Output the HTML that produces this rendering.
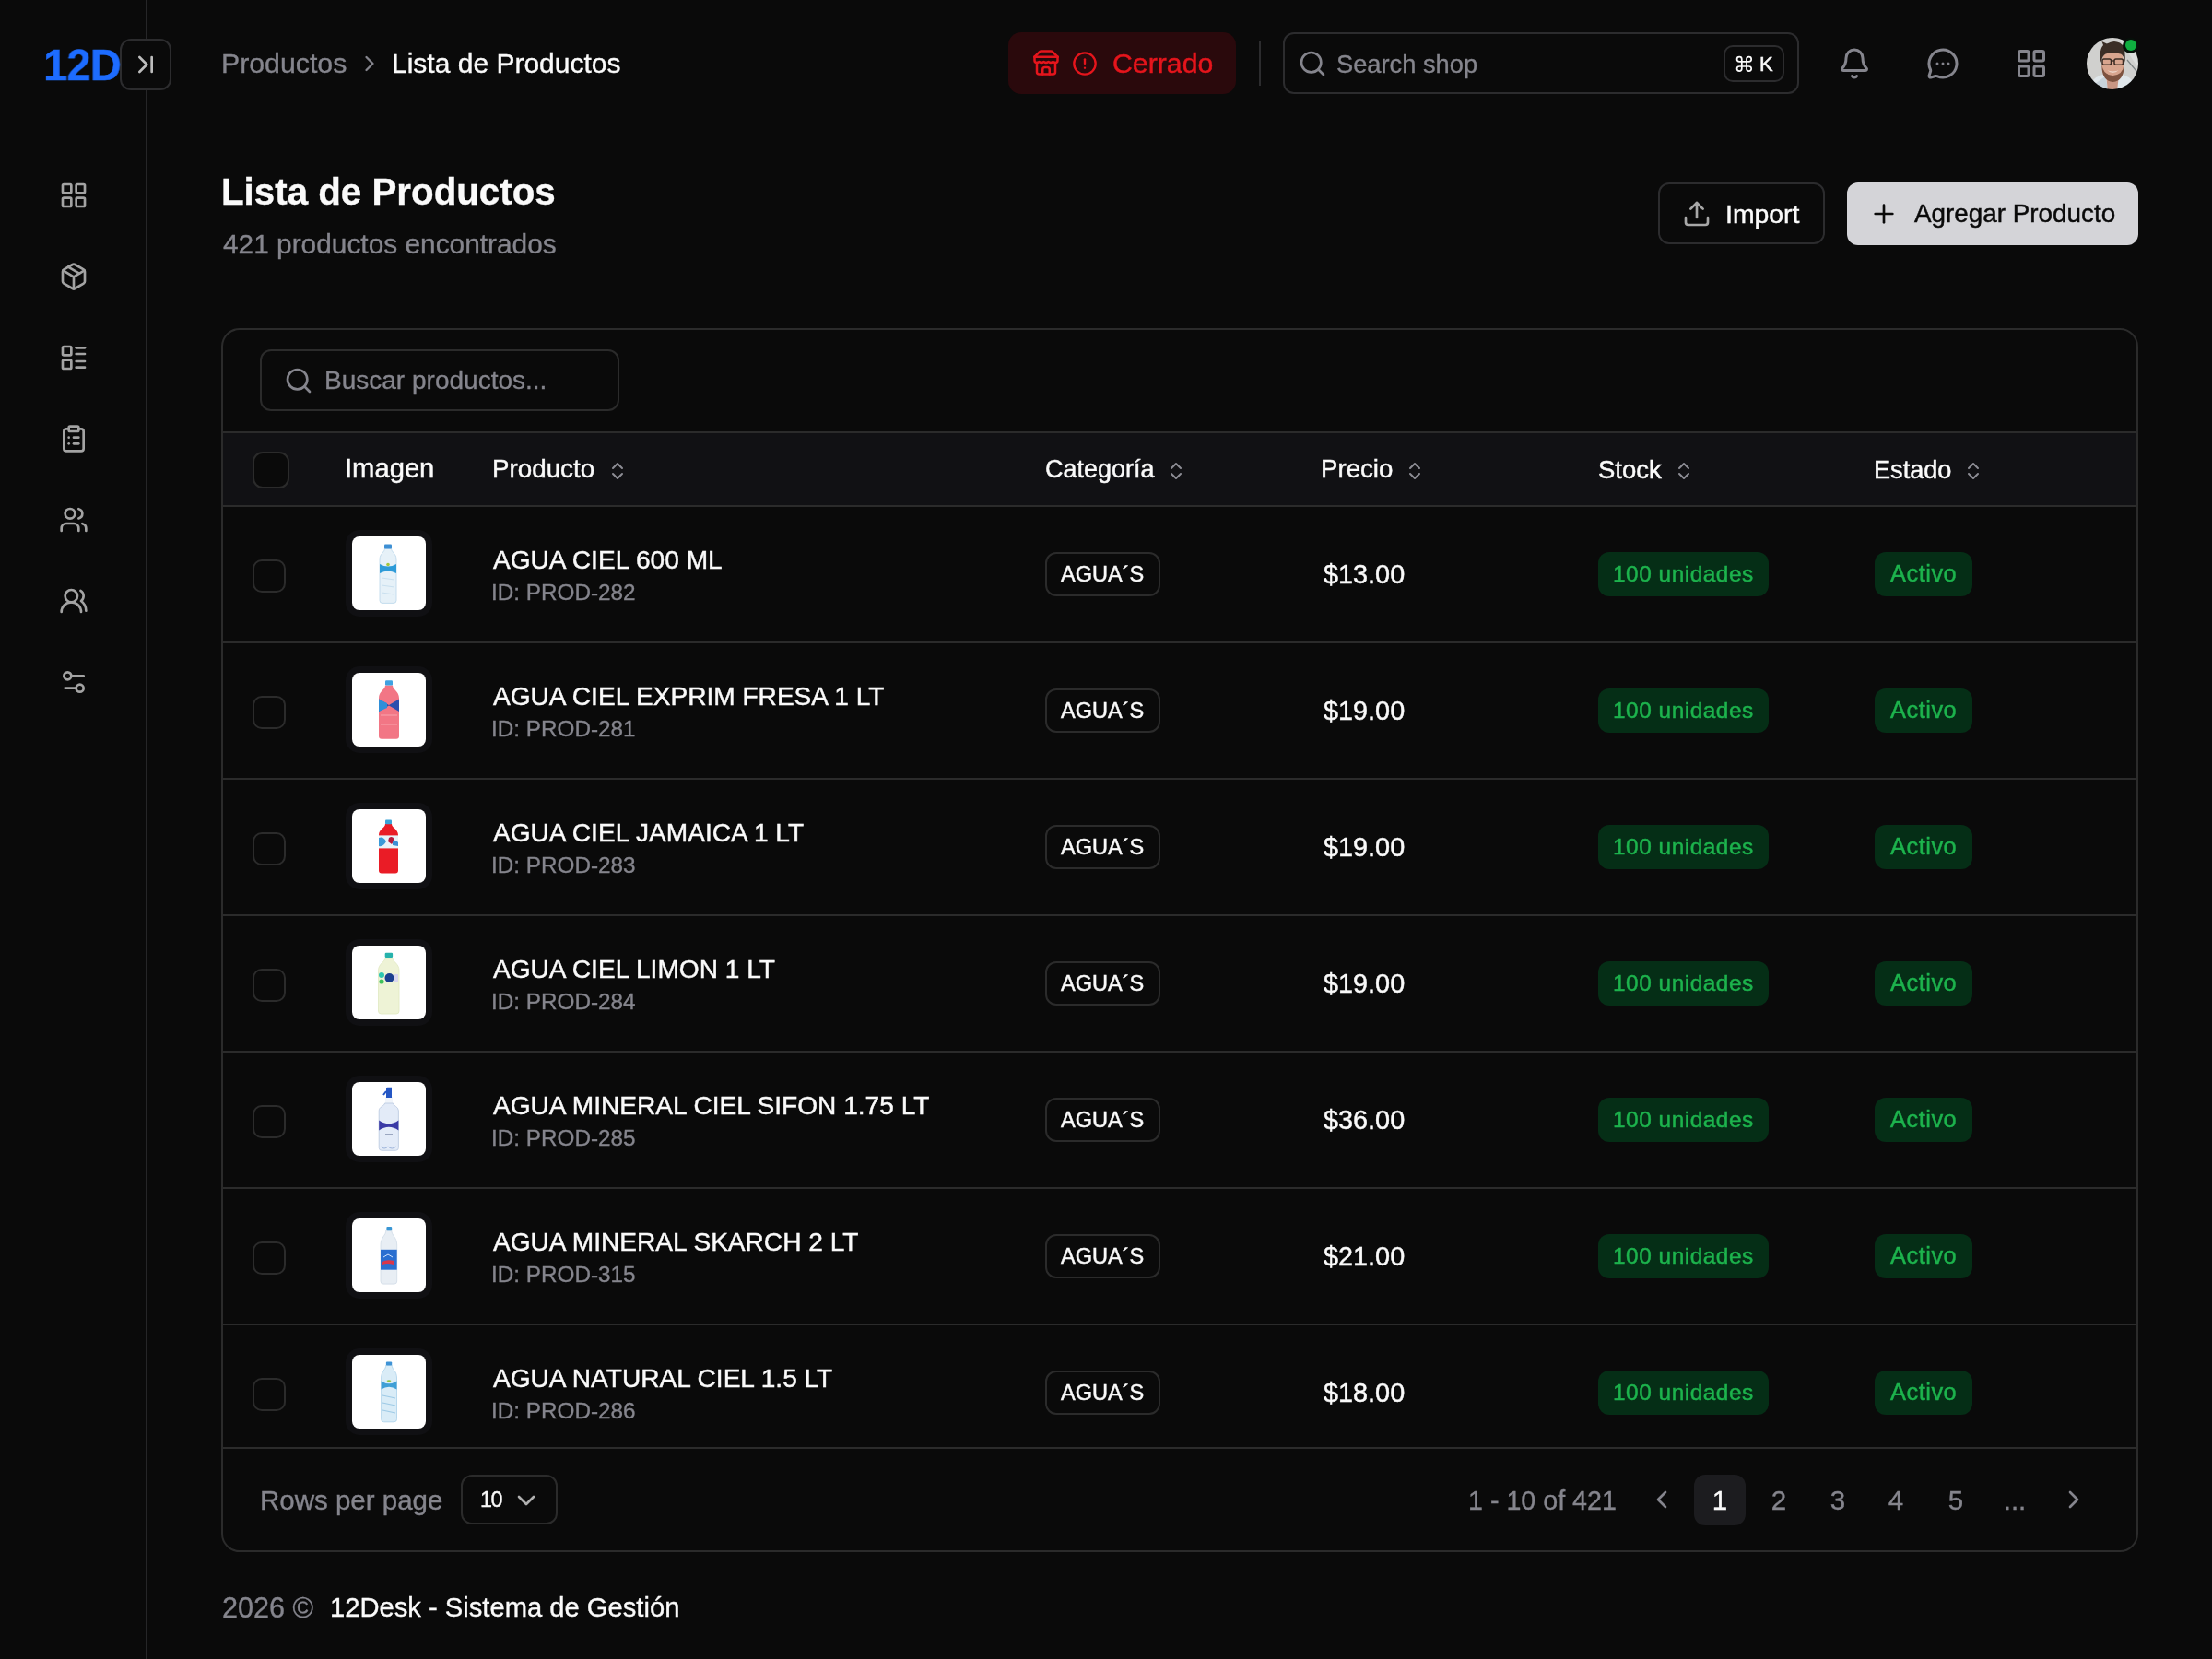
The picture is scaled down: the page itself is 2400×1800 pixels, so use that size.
<!DOCTYPE html>
<html><head><meta charset="utf-8">
<style>
*{margin:0;padding:0;box-sizing:border-box}
html,body{width:2400px;height:1800px;overflow:hidden;background:#0a0a0a;font-family:"Liberation Sans",sans-serif;color:#fafafa;-webkit-font-smoothing:antialiased}
.t{will-change:transform;-webkit-text-stroke:0.35px currentColor}
.m{-webkit-text-stroke:0.45px currentColor}
.a{position:absolute}
.t{position:absolute;white-space:nowrap;line-height:1}
svg.i{position:absolute;fill:none;stroke:currentColor;stroke-width:2;stroke-linecap:round;stroke-linejoin:round}
.mut{color:#85858d}
</style></head><body>
<!-- sidebar -->
<div class="a" style="left:158px;top:0;width:2px;height:1800px;background:#262628"></div>
<div class="a" style="left:130px;top:42px;width:56px;height:56px;border:2px solid #2c2c2e;border-radius:12px;background:#0a0a0a"></div>
<svg class="i" style="left:142px;top:54px;color:#bdbdbd" width="32" height="32" viewBox="0 0 24 24"><path d="m7 18 6-6-6-6"/><path d="M17 6v12"/></svg>

<div style="color:#a3a3a3">
<svg class="i" style="left:64px;top:196px" width="32" height="32" viewBox="0 0 24 24"><rect width="7" height="7" x="3" y="3" rx="1"/><rect width="7" height="7" x="14" y="3" rx="1"/><rect width="7" height="7" x="14" y="14" rx="1"/><rect width="7" height="7" x="3" y="14" rx="1"/></svg>
<svg class="i" style="left:64px;top:284px" width="32" height="32" viewBox="0 0 24 24"><path d="M11 21.73a2 2 0 0 0 2 0l7-4A2 2 0 0 0 21 16V8a2 2 0 0 0-1-1.73l-7-4a2 2 0 0 0-2 0l-7 4A2 2 0 0 0 3 8v8a2 2 0 0 0 1 1.73z"/><path d="M12 22V12"/><path d="m3.3 7 7.703 4.734a2 2 0 0 0 1.994 0L20.7 7"/><path d="m7.5 4.27 9 5.15"/></svg>
<svg class="i" style="left:64px;top:372px" width="32" height="32" viewBox="0 0 24 24"><rect width="7" height="7" x="3" y="3" rx="1"/><rect width="7" height="7" x="3" y="14" rx="1"/><path d="M14 4h7"/><path d="M14 9h7"/><path d="M14 15h7"/><path d="M14 20h7"/></svg>
<svg class="i" style="left:64px;top:460px" width="32" height="32" viewBox="0 0 24 24"><rect width="8" height="4" x="8" y="2" rx="1" ry="1"/><path d="M16 4h2a2 2 0 0 1 2 2v14a2 2 0 0 1-2 2H6a2 2 0 0 1-2-2V6a2 2 0 0 1 2-2h2"/><path d="M12 11h4"/><path d="M12 16h4"/><path d="M8 11h.01"/><path d="M8 16h.01"/></svg>
<svg class="i" style="left:64px;top:548px" width="32" height="32" viewBox="0 0 24 24"><path d="M16 21v-2a4 4 0 0 0-4-4H6a4 4 0 0 0-4 4v2"/><circle cx="9" cy="7" r="4"/><path d="M22 21v-2a4 4 0 0 0-3-3.87"/><path d="M16 3.13a4 4 0 0 1 0 7.75"/></svg>
<svg class="i" style="left:64px;top:636px" width="32" height="32" viewBox="0 0 24 24"><path d="M18 21a8 8 0 0 0-16 0"/><circle cx="10" cy="8" r="5"/><path d="M22 20c0-3.37-2-6.5-4-8a5 5 0 0 0-.45-8.3"/></svg>
<svg class="i" style="left:64px;top:724px" width="32" height="32" viewBox="0 0 24 24"><path d="M20 7h-9"/><path d="M14 17H5"/><circle cx="17" cy="17" r="3"/><circle cx="7" cy="7" r="3"/></svg>
</div>

<!-- top bar -->
<svg class="i mut" style="left:387px;top:55px" width="28" height="28" viewBox="0 0 24 24"><path d="m9 18 6-6-6-6"/></svg>

<div class="a" style="left:1094px;top:35px;width:247px;height:67px;border-radius:14px;background:#2a090c"></div>
<svg class="i" style="left:1119.5px;top:53px;color:#e5151c" width="30" height="30" viewBox="0 0 24 24"><path d="m2 7 4.41-4.41A2 2 0 0 1 7.83 2h8.34a2 2 0 0 1 1.42.59L22 7"/><path d="M4 12v8a2 2 0 0 0 2 2h12a2 2 0 0 0 2-2v-8"/><path d="M15 22v-4a2 2 0 0 0-2-2h-2a2 2 0 0 0-2 2v4"/><path d="M2 7h20"/><path d="M22 7v3a2 2 0 0 1-2 2a2.7 2.7 0 0 1-1.59-.63.7.7 0 0 0-.82 0A2.7 2.7 0 0 1 16 12a2.7 2.7 0 0 1-1.59-.63.7.7 0 0 0-.82 0A2.7 2.7 0 0 1 12 12a2.7 2.7 0 0 1-1.59-.63.7.7 0 0 0-.82 0A2.7 2.7 0 0 1 8 12a2.7 2.7 0 0 1-1.59-.63.7.7 0 0 0-.82 0A2.7 2.7 0 0 1 4 12a2 2 0 0 1-2-2V7"/></svg>
<svg class="i" style="left:1163px;top:55px;color:#e5151c" width="28" height="28" viewBox="0 0 24 24"><circle cx="12" cy="12" r="10"/><path d="M12 8v4"/><path d="M12 16h.01"/></svg>
<div class="a" style="left:1366px;top:45px;width:2px;height:48px;background:#2c2c2e"></div>

<div class="a" style="left:1392px;top:35px;width:560px;height:67px;border:2px solid #2c2c2e;border-radius:12px"></div>
<svg class="i mut" style="left:1408px;top:53px" width="32" height="32" viewBox="0 0 24 24"><circle cx="11" cy="11" r="8"/><path d="m21 21-4.3-4.3"/></svg>
<div class="a" style="left:1870px;top:49px;width:66px;height:40px;border:2px solid #2c2c2e;border-radius:10px"></div>

<svg class="i mut" style="left:1994px;top:51px" width="36" height="36" viewBox="0 0 24 24"><path d="M10.268 21a2 2 0 0 0 3.464 0"/><path d="M3.262 15.326A1 1 0 0 0 4 17h16a1 1 0 0 0 .74-1.673C19.41 13.956 18 12.499 18 8A6 6 0 0 0 6 8c0 4.499-1.411 5.956-2.738 7.326"/></svg>
<svg class="i mut" style="left:2090px;top:51px" width="36" height="36" viewBox="0 0 24 24"><path d="M2.992 16.342a2 2 0 0 1 .094 1.167l-1.065 3.29a1 1 0 0 0 1.236 1.168l3.413-.998a2 2 0 0 1 1.099.092 10 10 0 1 0-4.777-4.719"/><path d="M8 12h.01"/><path d="M12 12h.01"/><path d="M16 12h.01"/></svg>
<svg class="i mut" style="left:2186px;top:51px" width="36" height="36" viewBox="0 0 24 24"><rect width="7" height="7" x="3" y="3" rx="1"/><rect width="7" height="7" x="14" y="3" rx="1"/><rect width="7" height="7" x="14" y="14" rx="1"/><rect width="7" height="7" x="3" y="14" rx="1"/></svg>
<!-- avatar -->
<svg class="a" style="left:2264px;top:41px" width="56" height="56" viewBox="0 0 56 56">
<defs><clipPath id="av"><circle cx="28" cy="28" r="28"/></clipPath><filter id="bl" x="-10%" y="-10%" width="120%" height="120%"><feGaussianBlur stdDeviation="0.5"/></filter></defs>
<g clip-path="url(#av)"><g filter="url(#bl)">
<rect x="-2" y="-2" width="60" height="60" fill="#d0d0ce"/>
<path d="M33 -2 L58 -2 L58 36Z" fill="#dcdedd"/>
<path d="M44 24 L58 41" stroke="#7d8384" stroke-width="1.2"/>
<path d="M0 58 Q4 44 17 40 L39 40 Q52 44 56 58Z" fill="#dfe6ea"/>
<path d="M9 50 L20 42 L24 58 L12 58Z" fill="#c8d3da"/>
<path d="M21 40 L35 40 L33 58 L23 58Z" fill="#c99683"/>
<ellipse cx="28.5" cy="31" rx="12" ry="15.2" fill="#d8a58e"/>
<path d="M16.5 29 Q16 47 28.5 48 Q41 47 40.5 29 Q39.5 40 28.5 41 Q17.5 40 16.5 29Z" fill="#7e5340"/>
<path d="M22.5 35.2 Q28.5 40.2 34.5 35.2 Q28.5 37.6 22.5 35.2Z" fill="#f1dfd4"/>
<ellipse cx="28.5" cy="22" rx="11" ry="8" fill="#d8a58e"/><path d="M15.5 27 Q13 13 18 8 L16.5 4 L22 6.5 Q29 2 36 5.5 Q43 9 41.5 27 Q40.5 19 37 17.5 Q29 15.5 20.5 17.5 Q17 19 15.5 27Z" fill="#3b2e26"/>
<rect x="17" y="23" width="9.5" height="6.3" rx="1.8" fill="none" stroke="#3a2a22" stroke-width="1.5"/>
<rect x="30" y="23" width="9.5" height="6.3" rx="1.8" fill="none" stroke="#3a2a22" stroke-width="1.5"/>
<path d="M26.5 25 L30 25" stroke="#3a2a22" stroke-width="1.3"/>
</g></g></svg>
<div class="a" style="left:2303px;top:40.5px;width:17px;height:17px;border-radius:50%;background:#06120a"></div>
<div class="a" style="left:2305.8px;top:43px;width:12.4px;height:12.4px;border-radius:50%;background:#0fae3f"></div>

<!-- page header -->

<div class="a" style="left:1799px;top:198px;width:181px;height:67px;border:2px solid #2c2c2e;border-radius:12px"></div>
<svg class="i" style="left:1825px;top:216px;color:#a8a8a8" width="32" height="32" viewBox="0 0 24 24"><path d="M21 15v4a2 2 0 0 1-2 2H5a2 2 0 0 1-2-2v-4"/><polyline points="17 8 12 3 7 8"/><line x1="12" x2="12" y1="3" y2="15"/></svg>
<div class="a" style="left:2004px;top:198px;width:316px;height:68px;border-radius:12px;background:#d4d4d8"></div>
<svg class="i" style="left:2028px;top:216px;color:#0a0a0a" width="32" height="32" viewBox="0 0 24 24"><path d="M5 12h14"/><path d="M12 5v14"/></svg>

<!-- CARD -->
<div class="t" id="logo" style="left:46.84px;top:46.87px;font-size:48.00px;letter-spacing:-1.000px;font-weight:700;color:#1d6cff;transform:scaleX(0.985);transform-origin:0 0">12D</div>
<div class="t" id="bc_prod" style="left:239.89px;top:53.77px;font-size:30.28px;color:#85858d">Productos</div>
<div class="t" id="bc_lista" style="left:424.90px;top:53.91px;font-size:30.00px;">Lista de Productos</div>
<div class="t m" id="cerrado" style="left:1206.91px;top:54.18px;font-size:30.26px;color:#e5151c">Cerrado</div>
<div class="t" id="search" style="left:1450.44px;top:56.41px;font-size:27.28px;color:#85858d">Search shop</div>
<svg class="i" style="left:1882.1px;top:58.6px;color:#fafafa" width="20.8" height="20.8" viewBox="0 0 24 24"><path d="M15 6v12a3 3 0 1 0 3-3H6a3 3 0 1 0 3 3V6a3 3 0 1 0-3 3h12a3 3 0 1 0-3-3"/></svg>
<div class="t m" id="kk" style="left:1909.26px;top:58.88px;font-size:22.00px;">K</div>
<div class="t" id="title" style="left:240.13px;top:188.78px;font-size:40.31px;font-weight:700">Lista de Productos</div>
<div class="t" id="subtitle" style="left:241.92px;top:249.73px;font-size:29.85px;color:#85858d">421 productos encontrados</div>
<div class="t m" id="import" style="left:1872.04px;top:217.67px;font-size:28.39px;">Import</div>
<div class="t m" id="agregar" style="left:2077.04px;top:218.33px;font-size:27.84px;color:#0a0a0a">Agregar Producto</div>
<div class="a" style="left:240px;top:356px;width:2080px;height:1328px;border:2px solid #2b2b2b;border-radius:20px"></div>
<div class="a" style="left:282px;top:379px;width:390px;height:67px;border:2px solid #2b2b2b;border-radius:12px"></div>
<svg class="i" style="left:308px;top:397px;color:#85858d" width="32" height="32" viewBox="0 0 24 24"><circle cx="11" cy="11" r="8"/><path d="m21 21-4.3-4.3"/></svg>
<div class="t" id="ph" style="left:351.50px;top:399.47px;font-size:28.03px;color:#85858d">Buscar productos...</div>
<div class="a" style="left:242px;top:468px;width:2076px;height:2px;background:#2b2b2b"></div>
<div class="a" style="left:242px;top:470px;width:2076px;height:78px;background:#111114"></div>
<div class="a" style="left:242px;top:548px;width:2076px;height:2px;background:#2b2b2b"></div>
<div class="a" style="left:274px;top:490px;width:40px;height:40px;border:2px solid #2b2b2b;border-radius:11px;background:#0a0a0a"></div>
<div class="t m" id="h_img" style="left:373.94px;top:494.49px;font-size:29.19px;">Imagen</div>
<div class="t m" id="h_prod" style="left:533.94px;top:494.98px;font-size:27.78px;">Producto</div>
<svg class="i" style="left:657.5px;top:499px;color:#8d8d95" width="24" height="24" viewBox="0 0 24 24"><path d="m7 15 5 5 5-5"/><path d="m7 9 5-5 5 5"/></svg>
<div class="t m" id="h_cat" style="left:1133.73px;top:496.36px;font-size:26.98px;">Categoría</div>
<svg class="i" style="left:1264.3px;top:499px;color:#8d8d95" width="24" height="24" viewBox="0 0 24 24"><path d="m7 15 5 5 5-5"/><path d="m7 9 5-5 5 5"/></svg>
<div class="t m" id="h_pre" style="left:1433.06px;top:495.09px;font-size:27.66px;">Precio</div>
<svg class="i" style="left:1523.3px;top:499px;color:#8d8d95" width="24" height="24" viewBox="0 0 24 24"><path d="m7 15 5 5 5-5"/><path d="m7 9 5-5 5 5"/></svg>
<div class="t m" id="h_sto" style="left:1734.14px;top:495.94px;font-size:27.48px;">Stock</div>
<svg class="i" style="left:1815.2px;top:499px;color:#8d8d95" width="24" height="24" viewBox="0 0 24 24"><path d="m7 15 5 5 5-5"/><path d="m7 9 5-5 5 5"/></svg>
<div class="t m" id="h_est" style="left:2033.13px;top:496.23px;font-size:27.13px;">Estado</div>
<svg class="i" style="left:2129px;top:499px;color:#8d8d95" width="24" height="24" viewBox="0 0 24 24"><path d="m7 15 5 5 5-5"/><path d="m7 9 5-5 5 5"/></svg>
<div class="a" style="left:0;top:550px;width:2400px;height:1020px;overflow:hidden">
<div class="a" style="left:274px;top:57px;width:36px;height:36px;border:2px solid #2b2b2b;border-radius:10px"></div>
<div class="a" style="left:375px;top:25px;width:94px;height:94px;border-radius:15px;background:#101013"></div>
<svg class="a" style="left:382px;top:32px" width="80" height="80" viewBox="0 0 80 80"><rect width="80" height="80" rx="8" fill="#fff"/><path d="M35.5 13 C35.5 17.2 30 18.4 30 25 L30 69.4 Q30 72.4 33 72.4 L45 72.4 Q48 72.4 48 69.4 L48 25 C48 18.4 42.5 17.2 42.5 13Z" fill="#e6f1f8" stroke="#b9d6ea" stroke-width=".8"/><rect x="35" y="8.6" width="8" height="4.8" rx="1" fill="#3d8fd4"/><path d="M30 30 Q39 35 48 30 L48 40 Q39 35 30 40Z" fill="#2e9bd8"/><circle cx="39" cy="30.5" r="1.8" fill="#a4c63c"/><path d="M32 45 L46 47 M32 53 L46 55 M32 61 L46 63" stroke="#c9e0ef" stroke-width="1"/></svg>
<div class="t m" id="r_name" style="left:534.97px;top:43.93px;font-size:28.08px;">AGUA CIEL 600 ML</div>
<div class="t" id="r_id" style="left:533.25px;top:80.94px;font-size:24.29px;color:#85858d">ID: PROD-282</div>
<div class="a" style="left:1134px;top:49px;width:125px;height:48px;border:2px solid #2b2b2b;border-radius:12px"></div>
<div class="t m" id="r_cat" style="left:1151.32px;top:61.96px;font-size:23.56px;">AGUA´S</div>
<div class="t m" id="r_price" style="left:1435.97px;top:58.80px;font-size:28.83px;">$13.00</div>
<div class="a" style="left:1734px;top:49px;width:185px;height:48px;border-radius:12px;background:#052e16"></div>
<div class="t m" id="r_stock" style="left:1750.05px;top:61.20px;font-size:24.45px;letter-spacing:0.500px;color:#1db34d">100 unidades</div>
<div class="a" style="left:2034px;top:49px;width:106px;height:48px;border-radius:12px;background:#052e16"></div>
<div class="t m" id="r_act" style="left:2051.05px;top:60.37px;font-size:25.43px;letter-spacing:0.500px;color:#1db34d">Activo</div>
<div class="a" style="left:242px;top:146px;width:2076px;height:2px;background:#2b2b2b"></div>
<div class="a" style="left:274px;top:205px;width:36px;height:36px;border:2px solid #2b2b2b;border-radius:10px"></div>
<div class="a" style="left:375px;top:173px;width:94px;height:94px;border-radius:15px;background:#101013"></div>
<svg class="a" style="left:382px;top:180px" width="80" height="80" viewBox="0 0 80 80"><rect width="80" height="80" rx="8" fill="#fff"/><path d="M36.0 13.5 C36.0 18.4 29 19.8 29 27.5 L29 68.8 Q29 71.8 32 71.8 L48 71.8 Q51 71.8 51 68.8 L51 27.5 C51 19.8 44.0 18.4 44.0 13.5Z" fill="#f27685"/><rect x="36" y="8.2" width="8" height="5.3" rx="1.2" fill="#3fa2e2"/><path d="M29 28.4 L40 35 L51 28.4 L51 42 L40 35.5 L29 42Z" fill="#2d4fae"/><path d="M29 28.4 L38 33 L38 38 L29 42Z" fill="#2f8fd8"/><path d="M31 46 L49 46 M31 56 L49 56" stroke="#f7a3ad" stroke-width="1.2"/></svg>
<div class="t m" id="r_name1" style="left:534.97px;top:191.93px;font-size:28.08px;">AGUA CIEL EXPRIM FRESA 1 LT</div>
<div class="t" id="r_id1" style="left:533.25px;top:228.94px;font-size:24.29px;color:#85858d">ID: PROD-281</div>
<div class="a" style="left:1134px;top:197px;width:125px;height:48px;border:2px solid #2b2b2b;border-radius:12px"></div>
<div class="t m" id="r_cat1" style="left:1151.32px;top:209.96px;font-size:23.56px;">AGUA´S</div>
<div class="t m" id="r_price1" style="left:1435.97px;top:206.80px;font-size:28.83px;">$19.00</div>
<div class="a" style="left:1734px;top:197px;width:185px;height:48px;border-radius:12px;background:#052e16"></div>
<div class="t m" id="r_stock1" style="left:1750.05px;top:209.20px;font-size:24.45px;letter-spacing:0.500px;color:#1db34d">100 unidades</div>
<div class="a" style="left:2034px;top:197px;width:106px;height:48px;border-radius:12px;background:#052e16"></div>
<div class="t m" id="r_act1" style="left:2051.05px;top:208.37px;font-size:25.43px;letter-spacing:0.500px;color:#1db34d">Activo</div>
<div class="a" style="left:242px;top:294px;width:2076px;height:2px;background:#2b2b2b"></div>
<div class="a" style="left:274px;top:353px;width:36px;height:36px;border:2px solid #2b2b2b;border-radius:10px"></div>
<div class="a" style="left:375px;top:321px;width:94px;height:94px;border-radius:15px;background:#101013"></div>
<svg class="a" style="left:382px;top:328px" width="80" height="80" viewBox="0 0 80 80"><rect width="80" height="80" rx="8" fill="#fff"/><path d="M36.0 16 C36.0 20.2 29 21.4 29 28 L29 66.4 Q29 69.4 32 69.4 L47 69.4 Q50 69.4 50 66.4 L50 28 C50 21.4 43.0 20.2 43.0 16Z" fill="#ea1c26"/><rect x="36" y="11.6" width="7" height="4.6" rx="1" fill="#3aa3d8"/><rect x="29" y="28.4" width="21" height="14" fill="#e8f2f8"/><path d="M29 31 Q34 29 37 35 Q34 41 29 40Z" fill="#3b9ad8"/><path d="M40 31 Q44 28 46 33 L43 38 L39 35Z" fill="#b51a3d"/><path d="M44 34 Q48 33 50 36 L50 40 L44 39Z" fill="#3b8fd6"/></svg>
<div class="t m" id="r_name2" style="left:534.97px;top:339.93px;font-size:28.08px;">AGUA CIEL JAMAICA 1 LT</div>
<div class="t" id="r_id2" style="left:533.25px;top:376.94px;font-size:24.29px;color:#85858d">ID: PROD-283</div>
<div class="a" style="left:1134px;top:345px;width:125px;height:48px;border:2px solid #2b2b2b;border-radius:12px"></div>
<div class="t m" id="r_cat2" style="left:1151.32px;top:357.96px;font-size:23.56px;">AGUA´S</div>
<div class="t m" id="r_price2" style="left:1435.97px;top:354.80px;font-size:28.83px;">$19.00</div>
<div class="a" style="left:1734px;top:345px;width:185px;height:48px;border-radius:12px;background:#052e16"></div>
<div class="t m" id="r_stock2" style="left:1750.05px;top:357.20px;font-size:24.45px;letter-spacing:0.500px;color:#1db34d">100 unidades</div>
<div class="a" style="left:2034px;top:345px;width:106px;height:48px;border-radius:12px;background:#052e16"></div>
<div class="t m" id="r_act2" style="left:2051.05px;top:356.37px;font-size:25.43px;letter-spacing:0.500px;color:#1db34d">Activo</div>
<div class="a" style="left:242px;top:442px;width:2076px;height:2px;background:#2b2b2b"></div>
<div class="a" style="left:274px;top:501px;width:36px;height:36px;border:2px solid #2b2b2b;border-radius:10px"></div>
<div class="a" style="left:375px;top:469px;width:94px;height:94px;border-radius:15px;background:#101013"></div>
<svg class="a" style="left:382px;top:476px" width="80" height="80" viewBox="0 0 80 80"><rect width="80" height="80" rx="8" fill="#fff"/><path d="M36.0 13 C36.0 17.9 28.5 19.3 28.5 27 L28.5 71 Q28.5 74 31.5 74 L48 74 Q51 74 51 71 L51 27 C51 19.3 44.0 17.9 44.0 13Z" fill="#eef3d6" stroke="#dfe8c0" stroke-width=".8"/><rect x="35.7" y="7.7" width="8.4" height="5.3" rx="1.2" fill="#27b2ac"/><circle cx="32" cy="32" r="3" fill="#2cc6b0"/><circle cx="32" cy="39" r="2.6" fill="#3fc25a"/><circle cx="40.5" cy="35" r="5" fill="#1b3f8f"/><rect x="46" y="31" width="4" height="9" fill="#d9d6ee"/></svg>
<div class="t m" id="r_name3" style="left:534.97px;top:487.93px;font-size:28.08px;">AGUA CIEL LIMON 1 LT</div>
<div class="t" id="r_id3" style="left:533.25px;top:524.94px;font-size:24.29px;color:#85858d">ID: PROD-284</div>
<div class="a" style="left:1134px;top:493px;width:125px;height:48px;border:2px solid #2b2b2b;border-radius:12px"></div>
<div class="t m" id="r_cat3" style="left:1151.32px;top:505.96px;font-size:23.56px;">AGUA´S</div>
<div class="t m" id="r_price3" style="left:1435.97px;top:502.80px;font-size:28.83px;">$19.00</div>
<div class="a" style="left:1734px;top:493px;width:185px;height:48px;border-radius:12px;background:#052e16"></div>
<div class="t m" id="r_stock3" style="left:1750.05px;top:505.20px;font-size:24.45px;letter-spacing:0.500px;color:#1db34d">100 unidades</div>
<div class="a" style="left:2034px;top:493px;width:106px;height:48px;border-radius:12px;background:#052e16"></div>
<div class="t m" id="r_act3" style="left:2051.05px;top:504.37px;font-size:25.43px;letter-spacing:0.500px;color:#1db34d">Activo</div>
<div class="a" style="left:242px;top:590px;width:2076px;height:2px;background:#2b2b2b"></div>
<div class="a" style="left:274px;top:649px;width:36px;height:36px;border:2px solid #2b2b2b;border-radius:10px"></div>
<div class="a" style="left:375px;top:617px;width:94px;height:94px;border-radius:15px;background:#101013"></div>
<svg class="a" style="left:382px;top:624px" width="80" height="80" viewBox="0 0 80 80"><rect width="80" height="80" rx="8" fill="#fff"/><rect x="36" y="16" width="8" height="8" fill="#f1f5fb"/><path d="M35.5 23 C35.5 25.8 29.2 26.6 29.2 31 L29.2 71.3 Q29.2 74.3 32.2 74.3 L47.4 74.3 Q50.4 74.3 50.4 71.3 L50.4 31 C50.4 26.6 44.5 25.8 44.5 23Z" fill="#e3ebf8" stroke="#b8c6de" stroke-width=".8"/><path d="M37 17 L37 7 Q37 5.8 38.5 5.8 L43 5.8 L43 17Z" fill="#2456c4"/><path d="M37 10 L34 14" stroke="#2456c4" stroke-width="2"/><path d="M29.2 41.5 Q40 49 50.4 41.5 L50.4 52.5 Q40 45 29.2 52.5Z" fill="#3a3aa6"/><rect x="36" y="56" width="8" height="1.5" fill="#9aa6c0"/><path d="M31 70 Q35 74 39 70 Q43 74 48 70" stroke="#9db3da" stroke-width="1" fill="none"/></svg>
<div class="t m" id="r_name4" style="left:534.97px;top:635.93px;font-size:28.08px;">AGUA MINERAL CIEL SIFON 1.75 LT</div>
<div class="t" id="r_id4" style="left:533.25px;top:672.94px;font-size:24.29px;color:#85858d">ID: PROD-285</div>
<div class="a" style="left:1134px;top:641px;width:125px;height:48px;border:2px solid #2b2b2b;border-radius:12px"></div>
<div class="t m" id="r_cat4" style="left:1151.32px;top:653.96px;font-size:23.56px;">AGUA´S</div>
<div class="t m" id="r_price4" style="left:1435.97px;top:650.80px;font-size:28.83px;">$36.00</div>
<div class="a" style="left:1734px;top:641px;width:185px;height:48px;border-radius:12px;background:#052e16"></div>
<div class="t m" id="r_stock4" style="left:1750.05px;top:653.20px;font-size:24.45px;letter-spacing:0.500px;color:#1db34d">100 unidades</div>
<div class="a" style="left:2034px;top:641px;width:106px;height:48px;border-radius:12px;background:#052e16"></div>
<div class="t m" id="r_act4" style="left:2051.05px;top:652.37px;font-size:25.43px;letter-spacing:0.500px;color:#1db34d">Activo</div>
<div class="a" style="left:242px;top:738px;width:2076px;height:2px;background:#2b2b2b"></div>
<div class="a" style="left:274px;top:797px;width:36px;height:36px;border:2px solid #2b2b2b;border-radius:10px"></div>
<div class="a" style="left:375px;top:765px;width:94px;height:94px;border-radius:15px;background:#101013"></div>
<svg class="a" style="left:382px;top:772px" width="80" height="80" viewBox="0 0 80 80"><rect width="80" height="80" rx="8" fill="#fff"/><path d="M36.8 13 C36.8 18.6 31 20.2 31 29 L31 68.1 Q31 71.1 34 71.1 L45.7 71.1 Q48.7 71.1 48.7 68.1 L48.7 29 C48.7 20.2 42.8 18.6 42.8 13Z" fill="#e8eef4" stroke="#cfdae6" stroke-width=".8"/><rect x="37.4" y="8.9" width="5.8" height="4.4" rx="1" fill="#3a96d4"/><rect x="31" y="33.8" width="17.7" height="21.9" fill="#2a6fd0"/><path d="M33 47 Q37 44 46 46 L45 50 Q38 48 33 50Z" fill="#d9364a"/><path d="M34 42 L39 39 L44 42" stroke="#cfe3ff" stroke-width="1" fill="none"/></svg>
<div class="t m" id="r_name5" style="left:534.97px;top:783.93px;font-size:28.08px;">AGUA MINERAL SKARCH 2 LT</div>
<div class="t" id="r_id5" style="left:533.25px;top:820.94px;font-size:24.29px;color:#85858d">ID: PROD-315</div>
<div class="a" style="left:1134px;top:789px;width:125px;height:48px;border:2px solid #2b2b2b;border-radius:12px"></div>
<div class="t m" id="r_cat5" style="left:1151.32px;top:801.96px;font-size:23.56px;">AGUA´S</div>
<div class="t m" id="r_price5" style="left:1435.97px;top:798.80px;font-size:28.83px;">$21.00</div>
<div class="a" style="left:1734px;top:789px;width:185px;height:48px;border-radius:12px;background:#052e16"></div>
<div class="t m" id="r_stock5" style="left:1750.05px;top:801.20px;font-size:24.45px;letter-spacing:0.500px;color:#1db34d">100 unidades</div>
<div class="a" style="left:2034px;top:789px;width:106px;height:48px;border-radius:12px;background:#052e16"></div>
<div class="t m" id="r_act5" style="left:2051.05px;top:800.37px;font-size:25.43px;letter-spacing:0.500px;color:#1db34d">Activo</div>
<div class="a" style="left:242px;top:886px;width:2076px;height:2px;background:#2b2b2b"></div>
<div class="a" style="left:274px;top:945px;width:36px;height:36px;border:2px solid #2b2b2b;border-radius:10px"></div>
<div class="a" style="left:375px;top:913px;width:94px;height:94px;border-radius:15px;background:#101013"></div>
<svg class="a" style="left:382px;top:920px" width="80" height="80" viewBox="0 0 80 80"><rect width="80" height="80" rx="8" fill="#fff"/><path d="M36.85 11 C36.85 15.899999999999999 31.6 17.3 31.6 25 L31.6 69.8 Q31.6 72.8 34.6 72.8 L45.5 72.8 Q48.5 72.8 48.5 69.8 L48.5 25 C48.5 17.3 43.15 15.899999999999999 43.15 11Z" fill="#d9ecf7" stroke="#a9d0ea" stroke-width=".8"/><rect x="36.9" y="7.5" width="6.3" height="4" rx="1" fill="#3e93d6"/><path d="M31.6 28.5 Q40 34 48.5 28.5 L48.5 37.5 Q40 32 31.6 37.5Z" fill="#3f9fd6"/><path d="M37.5 28 Q40 26.5 42.5 28 Q40 31 37.5 28Z" fill="#8fc43c"/><path d="M33 44 L47 47 M33 52 L47 55 M33 60 L47 63" stroke="#9ecae6" stroke-width="1.2"/></svg>
<div class="t m" id="r_name6" style="left:534.97px;top:931.93px;font-size:28.08px;">AGUA NATURAL CIEL 1.5 LT</div>
<div class="t" id="r_id6" style="left:533.25px;top:968.94px;font-size:24.29px;color:#85858d">ID: PROD-286</div>
<div class="a" style="left:1134px;top:937px;width:125px;height:48px;border:2px solid #2b2b2b;border-radius:12px"></div>
<div class="t m" id="r_cat6" style="left:1151.32px;top:949.96px;font-size:23.56px;">AGUA´S</div>
<div class="t m" id="r_price6" style="left:1435.97px;top:946.80px;font-size:28.83px;">$18.00</div>
<div class="a" style="left:1734px;top:937px;width:185px;height:48px;border-radius:12px;background:#052e16"></div>
<div class="t m" id="r_stock6" style="left:1750.05px;top:949.20px;font-size:24.45px;letter-spacing:0.500px;color:#1db34d">100 unidades</div>
<div class="a" style="left:2034px;top:937px;width:106px;height:48px;border-radius:12px;background:#052e16"></div>
<div class="t m" id="r_act6" style="left:2051.05px;top:948.37px;font-size:25.43px;letter-spacing:0.500px;color:#1db34d">Activo</div>
</div>
<div class="a" style="left:242px;top:1570px;width:2076px;height:2px;background:#2b2b2b"></div>
<div class="t" id="f_rows" style="left:281.53px;top:1612.73px;font-size:29.50px;color:#85858d">Rows per page</div>
<div class="a" style="left:500px;top:1600px;width:105px;height:54px;border:2px solid #2b2b2b;border-radius:12px"></div>
<div class="t" id="f_10" style="left:521.28px;top:1616.23px;font-size:23.36px;letter-spacing:-1.500px;">10</div>
<svg class="i" style="left:555.3px;top:1611.8px;color:#b0b0b0" width="32" height="32" viewBox="0 0 24 24"><path d="m6 9 6 6 6-6"/></svg>
<div class="t" id="f_of" style="left:1593.13px;top:1614.23px;font-size:28.67px;color:#85858d">1 - 10 of 421</div>
<svg class="i" style="left:1787px;top:1611px;color:#85858d" width="32" height="32" viewBox="0 0 24 24"><path d="m15 18-6-6 6-6"/></svg>
<div class="a" style="left:1838px;top:1600px;width:56px;height:55px;border-radius:12px;background:#1c1c1f"></div>
<div class="t" id="pg0" style="left:1825.7px;width:80px;text-align:center;top:1613.03px;font-size:29.5px;color:#fafafa">1</div>
<div class="t" id="pg1" style="left:1889.7px;width:80px;text-align:center;top:1613.03px;font-size:29.5px;color:#85858d">2</div>
<div class="t" id="pg2" style="left:1953.9px;width:80px;text-align:center;top:1613.03px;font-size:29.5px;color:#85858d">3</div>
<div class="t" id="pg3" style="left:2017.3000000000002px;width:80px;text-align:center;top:1613.03px;font-size:29.5px;color:#85858d">4</div>
<div class="t" id="pg4" style="left:2081.5px;width:80px;text-align:center;top:1613.03px;font-size:29.5px;color:#85858d">5</div>
<div class="t" id="pgdots" style="left:2146px;width:80px;text-align:center;top:1613.03px;font-size:29.5px;color:#85858d">...</div>
<svg class="i" style="left:2233.5px;top:1611px;color:#85858d" width="32" height="32" viewBox="0 0 24 24"><path d="m9 18 6-6-6-6"/></svg>
<div class="t" id="pf_year" style="left:240.74px;top:1728.61px;font-size:30.59px;color:#85858d">2026 ©</div>
<div class="t" id="pf_name" style="left:357.94px;top:1729.80px;font-size:29.18px;">12Desk - Sistema de Gestión</div>
</body></html>
